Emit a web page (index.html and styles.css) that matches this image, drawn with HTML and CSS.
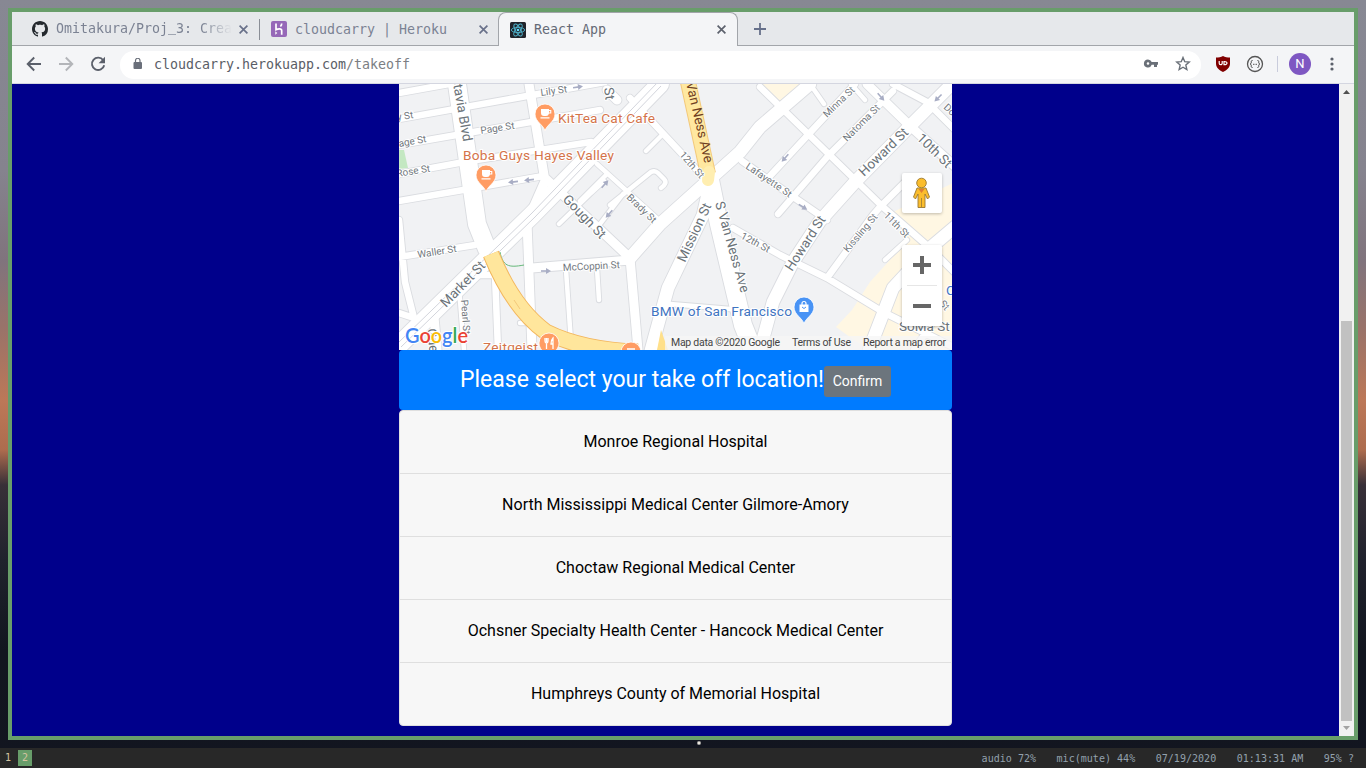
FILE: index.html
```html
<!DOCTYPE html>
<html lang="en">
<head>
<meta charset="utf-8">
<title>React App</title>
<link rel="stylesheet" href="styles.css">
</head>
<body>
<div class="desktop">
  <div class="window">
    <div class="tabs">
      <div class="tab tab-first">
        <svg class="fav" viewBox="0 0 16 16"><path fill="#24292e" d="M8 0C3.58 0 0 3.58 0 8c0 3.54 2.29 6.53 5.47 7.59.4.07.55-.17.55-.38 0-.19-.01-.82-.01-1.49-2.01.37-2.53-.49-2.69-.94-.09-.23-.48-.94-.82-1.13-.28-.15-.68-.52-.01-.53.63-.01 1.08.58 1.23.82.72 1.21 1.87.87 2.33.66.07-.52.28-.87.51-1.07-1.78-.2-3.64-.89-3.64-3.95 0-.87.31-1.59.82-2.15-.08-.2-.36-1.02.08-2.12 0 0 .67-.21 2.2.82.64-.18 1.32-.27 2-.27s1.36.09 2 .27c1.53-1.04 2.2-.82 2.2-.82.44 1.1.16 1.92.08 2.12.51.56.82 1.27.82 2.15 0 3.07-1.87 3.75-3.65 3.95.29.25.54.73.54 1.48 0 1.07-.01 1.93-.01 2.2 0 .21.15.46.55.38A8.01 8.01 0 0 0 16 8c0-4.42-3.58-8-8-8z"/></svg>
        <span class="tab-title fade">Omitakura/Proj<span class="underscore">_</span>3: Crea</span>
        <svg class="close" viewBox="0 0 8 8"><path d="M.5.5l7 7m0-7l-7 7"/></svg>
      </div>
      <div class="tab tab-second">
        <svg class="fav" viewBox="0 0 16 16"><rect width="16" height="16" rx="2" fill="#9668b8"/><path d="M5 2.500v6.200c2-1 5.700-1.700 5.700 1v4M10.700 2.500c0 1.200-.5 2.200-1.300 3" fill="none" stroke="#fff" stroke-width="1.700"/><path d="M4.300 10.200l2 1.800-2 1.800z" fill="#fff"/></svg>
        <span class="tab-title">cloudcarry | Heroku</span>
        <svg class="close" viewBox="0 0 8 8"><path d="M.5.5l7 7m0-7l-7 7"/></svg>
      </div>
      <div class="tab tab-active">
        <svg class="fav" viewBox="0 0 16 16"><rect width="16" height="16" rx="1.500" fill="#20232a"/><g fill="none" stroke="#4fb3cc" stroke-width=".9"><ellipse cx="8" cy="8" rx="6.700" ry="2.600"/><ellipse cx="8" cy="8" rx="6.700" ry="2.600" transform="rotate(60 8 8)"/><ellipse cx="8" cy="8" rx="6.700" ry="2.600" transform="rotate(120 8 8)"/></g><circle cx="8" cy="8" r="1.300" fill="#61dafb"/></svg>
        <span class="tab-title">React App</span>
        <svg class="close dark" viewBox="0 0 8 8"><path d="M.5.5l7 7m0-7l-7 7"/></svg>
      </div>
      <div class="new-tab"><svg width="12" height="12" viewBox="0 0 12 12"><path d="M6 0v12M0 6h12" stroke="#66708a" stroke-width="1.800"/></svg></div>
    </div>
    <div class="toolbar">
      <div class="nav">
        <svg width="16" height="16" viewBox="0 0 16 16"><path d="M15 8H2M8.200 1.500L1.700 8l6.500 6.500" fill="none" stroke="#5b606b" stroke-width="1.900"/></svg>
        <svg width="16" height="16" viewBox="0 0 16 16"><path d="M1 8h13M7.800 1.500L14.300 8l-6.500 6.500" fill="none" stroke="#b3b5b9" stroke-width="1.900"/></svg>
        <svg width="16" height="16" viewBox="0 0 16 16"><path d="M13.200 4.200A6.200 6.200 0 1 0 14.200 9.200" fill="none" stroke="#5b606b" stroke-width="1.900"/><path d="M15 .8v6.400H8.600z" fill="#5b606b"/></svg>
      </div>
      <div class="omnibox">
        <svg width="10" height="12" viewBox="0 0 10 12"><rect x=".5" y="4" width="8.500" height="7" rx="1" fill="#6a6f7a"/><path d="M2.500 4.500v-2a2.250 2.250 0 0 1 4.500 0v2" fill="none" stroke="#6a6f7a" stroke-width="1.200"/></svg>
        <span class="url"><b>cloudcarry.herokuapp.com</b>/takeoff</span>
        <svg class="key" width="16" height="10" viewBox="0 0 16 10"><path d="M5 .5a4 4 0 1 0 3.700 5.300H11V8h3V5.800h1V3.100H8.700A4 4 0 0 0 5 .5zm0 2.700a1.300 1.300 0 1 1 0 2.600 1.300 1.300 0 0 1 0-2.600z" fill="#6a7078"/></svg>
        <svg width="16" height="16" viewBox="0 0 16 16"><path d="M8 1.500l1.750 4.200 4.500.4-3.400 3 1 4.400L8 11.200 4.150 13.500l1-4.400-3.400-3 4.500-.4z" fill="none" stroke="#6a7078" stroke-width="1.400"/></svg>
      </div>
      <div class="extensions">
        <svg width="16" height="16" viewBox="0 0 16 16"><path d="M8 0c2 1.300 4.500 1.500 7 1.500v6c0 4-3 6.500-7 8.500C4 14 1 11.500 1 7.500v-6C3.500 1.500 6 1.300 8 0z" fill="#800000"/><path d="M4.200 5v2.200a1.500 1.500 0 0 0 3 0V5M9 5.500v3.200c4 .3 4-3.500 0-3.200z" fill="none" stroke="#fff" stroke-width="1.200"/></svg>
        <svg width="18" height="18" viewBox="0 0 18 18"><circle cx="9" cy="9" r="7.500" fill="none" stroke="#555" stroke-width="1.300"/><path d="M6.500 5.500c-1.500 0-1.200.8-1.200 1.800S5 8.600 4.200 9c.8.300 1.100.8 1.100 1.700s-.3 1.800 1.200 1.800M11.500 5.500c1.500 0 1.200.8 1.200 1.800s.3 1.300 1.100 1.700c-.8.300-1.100.8-1.100 1.700s.3 1.800-1.200 1.800" fill="none" stroke="#444"/><path d="M7 9.300h4" stroke="#555" stroke-dasharray="1 .5"/></svg>
        <i class="divider"></i>
        <span class="avatar">N</span>
        <svg width="4" height="14" viewBox="0 0 4 14"><g fill="#5b606b"><circle cx="2" cy="2" r="1.600"/><circle cx="2" cy="7" r="1.600"/><circle cx="2" cy="12" r="1.600"/></g></svg>
      </div>
    </div>
    <div class="viewport">
      <main class="page">
        <svg class="map" viewBox="399 84 553 266">
          <defs>
            <g id="pin"><path d="M0 14C-1.200 8-10 5-10-3a10 10 0 0 1 20 0C10 5 1.200 8 0 14z" stroke="#fff" stroke-width=".8"/></g>
            <g id="cup" fill="#fff"><path d="M-5-7H3v1h2.300v3.500H3C2.500-.8 1.500 0 0 0h-2c-2 0-3-1-3-3zM3-5v1.500h1.200V-5zM-5.500 1.200h9v1.300h-9z"/></g>
            <g id="dir"><path d="M-5 0H1" stroke="#a8adc4" stroke-width="1.600"/><path d="M0-3L5 0 0 3z" fill="#a8adc4"/></g>
            <g id="roads" fill="none" stroke-linejoin="round" stroke-linecap="round">
              <g class="w5">
                <path d="M597 269l2 31M566 270l5 72M670 304l72 6M597 164l63 57M663 134l-17 17M610 205l41-33q4-2 7 1l6 6q4 4-3 9M600 224l23-30M580 201l27-27M559 224l32-31 13-12M810 84l14 20M851 84l14 16M459 288l5 62M520 323h12M885 260l22-20"/>
              </g>
              <g class="w7">
                <path d="M399 93l50-9M399 119l206-37M399 145l201-35M399 174l65-12 127-20M399 201l64-11 80-14M399 257l76-12M399 220l6 62 9 36-15-5M477 275h18l3 75M630 98l80 86M742 161l50 35 35 24M760 87l123 120 47 41 40 40M893 84l34 18 30 30M855 84l-85 92M893 91l-65 65-50 58M905 182l-25 25-7 8-46 63M733 228l47 27 47 23 56 34 80 40M914 350l20-30"/>
              </g>
              <g class="w9">
                <path d="M529 84l16 97-18 41 5 128M532 268l98-8M545 178l85 80 8 92M867 84l43 42 50 45M434 317l3 33M607 90l10 10"/>
              </g>
              <g class="w13">
                <path d="M810 84l-50 43-20 25-80 72-30 34M952 84l-42 42-55 56-35 39-27 41-20 40-13 48M963 220l-33 28-37 40-24 62M710 184l-7 31-35 73-17 62"/>
              </g>
              <g class="w19">
                <path d="M457 84l20 140 10 25M710 180l9 44 24 101 10 25M399 345l133-130 48-49 80-82"/>
              </g>
            </g>
          </defs>
          <rect x="399" y="84" width="553" height="266" fill="#f1f2f4"/>
          <path d="M760 84h40l-18 19zM908 240l-38 42-18 28-16 17 18 13 16 10h83V183l-60 29z" fill="#fff7e3"/>
          <path d="M399 150h5l4 18-9 1z" fill="#c4e8c2"/>
          <use href="#roads" class="casing"/>
          <use href="#roads" class="surface"/>
          <path d="M401 347l134-130 47-49 79-82M398 343l134-130 47-49 79-82" fill="none" stroke="#d3d5dc"/>
          <path d="M500 252c3 14 8 16 24 13M488 266l4 9" fill="none" stroke="#65b879"/>
          <path d="M491 254q22 54 55 78 36 18 92 20" fill="none" stroke="#f3b75e" stroke-width="17"/>
          <path d="M491 254q22 54 55 78 36 18 92 20" fill="none" stroke="#ffe69c" stroke-width="15"/>
          <path d="M514 300l6 9" stroke="#f3c97b" fill="none"/>
          <path d="M688 82l20 92" fill="none" stroke="#f3c97b" stroke-width="16"/>
          <path d="M688 82l20 92" fill="none" stroke="#ffe8a0" stroke-width="14"/>
          <path d="M709 172l-1 8" stroke="#ffeeb0" stroke-width="12" stroke-linecap="round"/>
          <path d="M661 330l7 20h-11z" fill="#ffe08a"/>
          <g>
            <use href="#dir" transform="translate(513 182) rotate(173)"/><use href="#dir" transform="translate(529 180) rotate(173)"/>
            <use href="#dir" transform="translate(578 87) rotate(-8)"/><use href="#dir" transform="translate(546 271)"/>
            <use href="#dir" transform="translate(605 184) rotate(-48)"/><use href="#dir" transform="translate(609 214) rotate(132)"/>
            <use href="#dir" transform="translate(881 97) rotate(48)"/><use href="#dir" transform="translate(938 98) rotate(135)"/>
            <use href="#dir" transform="translate(785 158) rotate(132)"/><use href="#dir" transform="translate(803 207) rotate(32)"/>
          </g>
          <g class="street small">
            <text transform="translate(541 96) rotate(-8)">Lily St</text>
            <text transform="translate(481 134) rotate(-9)">Page St</text>
            <text transform="translate(395 121) rotate(-9)">ly St</text>
            <text transform="translate(393 148) rotate(-10)">Page St</text>
            <text transform="translate(397 177) rotate(-9)">Rose St</text>
            <text transform="translate(418 258) rotate(-9)">Waller St</text>
            <text transform="translate(563 271) rotate(-3)">McCoppin St</text>
            <text transform="translate(461 300) rotate(86)">Pearl St</text>
            <text transform="translate(679 155) rotate(49)">12th St</text>
            <text transform="translate(626 198) rotate(44)">Brady St</text>
            <text transform="translate(745 168) rotate(34)">Lafayette St</text>
            <text transform="translate(740 238) rotate(28)">12th St</text>
            <text transform="translate(827 118) rotate(-44)">Minna St</text>
            <text transform="translate(847 142) rotate(-45)">Natoma St</text>
            <text transform="translate(848 253) rotate(-50)">Kissling St</text>
            <text transform="translate(883 216) rotate(45)">11th St</text>
            <text transform="translate(943 108) rotate(43)">Dore St</text>
            <text transform="translate(939 304) rotate(48)">St</text>
          </g>
          <g class="street">
            <text transform="translate(452 78) rotate(80)">ctavia Blvd</text>
            <text transform="translate(604 88) rotate(82)">St</text>
            <text transform="translate(562 200) rotate(46)">Gough St</text>
            <text transform="translate(446 308) rotate(-46)">Market St</text>
            <text transform="translate(685 263) rotate(-65)">Mission St</text>
            <text transform="translate(715 203) rotate(74)">S Van Ness Ave</text>
            <text transform="translate(864 177) rotate(-44)">Howard St</text>
            <text transform="translate(792 272) rotate(-57)">Howard St</text>
            <text transform="translate(916 139) rotate(44)">10th St</text>
            <text x="899" y="331">SoMa St</text>
            <text transform="translate(427 329) rotate(84)">Gue</text>
            <text transform="translate(686 83) rotate(77)" class="avenue">Van Ness Ave</text>
          </g>
          <g class="poi">
            <text x="558" y="123" textLength="97">KitTea Cat Cafe</text>
            <text x="463" y="160" textLength="151">Boba Guys Hayes Valley</text>
            <text x="483" y="352" textLength="55">Zeitgeist</text>
            <text x="651" y="316" textLength="141" class="shop">BMW of San Francisco</text>
            <text x="946" y="295" class="shop">C</text>
          </g>
          <g fill="#ff9c63"><use href="#pin" x="545" y="117"/><use href="#pin" x="486" y="178"/><use href="#pin" x="549" y="346"/><use href="#pin" x="631" y="355"/></g>
          <use href="#pin" x="804" y="310" fill="#4893f5"/>
          <use href="#cup" x="546" y="116"/><use href="#cup" x="487" y="177"/>
          <path d="M545 338v3q0 2 1.500 2v6M548 338v3q0 2-1.500 2M546.500 338v4M553 349v-11q-2 2-2 6h2M627 349h8" fill="none" stroke="#fff" stroke-width="1.300"/>
          <path d="M799.500 304.500h9v7.500h-9z" fill="#fff"/><path d="M802 305v-1.500a2 2 0 0 1 4 0v1.500" fill="none" stroke="#fff" stroke-width="1.200"/><path d="M802 307q2 3 4 0" fill="none" stroke="#4893f5"/>
          <text class="google" x="405" y="343" textLength="63" lengthAdjust="spacingAndGlyphs"><tspan fill="#4285f4">G</tspan><tspan fill="#ea4335">o</tspan><tspan fill="#fbbc04">o</tspan><tspan fill="#4285f4">g</tspan><tspan fill="#34a853">l</tspan><tspan fill="#ea4335">e</tspan></text>
          <rect x="665" y="336" width="287" height="14" fill="#f5f5f5" opacity=".75"/>
          <g class="legal"><text x="671" y="346" textLength="109">Map data ©2020 Google</text><text x="792" y="346" textLength="59">Terms of Use</text><text x="863" y="346" textLength="83">Report a map error</text></g>
          <g class="control"><rect x="902" y="173" width="40" height="40" rx="2"/><rect x="902" y="245" width="40" height="81" rx="2"/></g>
          <path d="M907 285.500h30" stroke="#e6e6e6"/>
          <path d="M913 265h18M922 256v18M913 306h18" stroke="#666" stroke-width="4"/>
          <g fill="#fbbd2c" stroke="#9a7833" stroke-width=".9"><path d="M917 188h9l3.500 9-2 2-2.500-5v13.500h-7V194l-2.500 5-2-2z"/><circle cx="921.500" cy="183" r="4.800"/></g><path d="M918.500 189h6l-3 4z" fill="#df7d32"/><path d="M921.500 198v9" stroke="#9a7833" stroke-width=".8"/>
        </svg>
        <header class="banner"><h1>Please select your take off location!</h1><button class="confirm">Confirm</button></header>
        <ul class="hospitals">
          <li>Monroe Regional Hospital</li>
          <li>North Mississippi Medical Center Gilmore-Amory</li>
          <li>Choctaw Regional Medical Center</li>
          <li>Ochsner Specialty Health Center - Hancock Medical Center</li>
          <li>Humphreys County of Memorial Hospital</li>
        </ul>
      </main>
      <div class="scrollbar">
        <svg width="7" height="4" viewBox="0 0 7 4"><path d="M0 4l3.500-4L7 4z" fill="#505050"/></svg>
        <i class="thumb"></i>
        <svg width="7" height="4" viewBox="0 0 7 4"><path d="M0 0l3.500 4L7 0z" fill="#a3a3a3"/></svg>
      </div>
    </div>
  </div>
  <footer class="status">
    <span class="space">1</span><span class="space current">2</span>
    <div class="stats"><span>audio 72%</span><span>mic(mute) 44%</span><span>07/19/2020</span><span>01:13:31 AM</span><span>95% ?</span></div>
  </footer>
</div>
</body>
</html>
```
FILE: styles.css
```css
* { box-sizing: border-box; }
body { margin: 0; font-family: Roboto, sans-serif; }
svg { display: block; flex: none; }
.desktop {
  width: 1366px; height: 768px; overflow: hidden;
  display: flex; flex-direction: column; justify-content: space-between;
  padding-top: 8px;
  background:
    radial-gradient(circle at 699px 743px, #e8e4dc 1px, transparent 2.500px),
    linear-gradient(#878893 0, #85838e 170px, #80747d 260px, #9a7369 330px, #bc7858 400px, #ad6c4e 450px, #383038 485px, #20222d 560px, #12161f 650px, #121520 768px);
}
.window {
  width: 1350px; height: 732px; margin-left: 8px;
  border: 4px solid #689d6a;
  display: flex; flex-direction: column;
}
.tabs { height: 34px; flex: none; display: flex; background: #e6e8eb; border-bottom: 1px solid #a2a5aa; }
.tab { height: 34px; display: flex; align-items: center; font: 13.290px "DejaVu Sans Mono", monospace; color: #7b8293; }
.tab-title { flex: 1; margin-left: 8px; padding-top: 1px; white-space: nowrap; overflow: hidden; line-height: 22px; }
.underscore { font-family: "Liberation Mono", monospace; }
.fav { width: 16px; height: 16px; }
.close { width: 9px; height: 9px; stroke: #69718a; stroke-width: 1.500; fill: none; }
.close.dark { stroke: #5d626d; }
.fade { mask-image: linear-gradient(90deg, #000 145px, transparent 176px); }
.tab-first { width: 236px; padding-left: 20px; }
.tab-first .tab-title { flex: 0 0 176px; margin-right: 7px; }
.tab-second { width: 250px; padding: 0 10px 0 23px; background: linear-gradient(#8a8e96, #8a8e96) 11px 7px / 1px 21px no-repeat; }
.tab-active { width: 240px; padding: 0 11px; background: #f4f5f7; border: 1px solid #a2a5aa; border-bottom: 0; border-radius: 8px 8px 0 0; color: #646a76; }
.new-tab { padding: 11px 16px; }
.toolbar { height: 38px; flex: none; display: flex; align-items: center; background: #f4f5f7; border-bottom: 1px solid #d4d6e0; }
.nav { display: flex; gap: 16px; padding: 0 14px; }
.nav svg, .omnibox svg { margin-top: -1px; }
.omnibox { width: 1081px; height: 28px; border-radius: 14px; background: #fff; display: flex; align-items: center; padding: 0 10px 0 13px; }
.url { flex: 1; margin-left: 11px; font: 13.290px "DejaVu Sans Mono", monospace; color: #7b7e83; }
.url b { font-weight: 400; color: #595d66; }
.key { margin-right: 16px; }
.extensions { flex: 1; display: flex; align-items: center; padding-left: 14px; margin-top: -1px; }
.extensions svg:nth-child(2) { margin-left: 15px; }
.divider { width: 1px; height: 16px; background: #c9ccdc; margin: 0 11px 0 13px; }
.avatar { width: 22px; height: 22px; border-radius: 50%; background: #7e57c2; color: #fff; font-size: 13px; line-height: 22px; text-align: center; margin-right: 19px; }
.viewport { flex: 1; display: flex; justify-content: flex-end; background: #00008b; }
.page { width: 553px; margin-right: 387px; }
.map { width: 553px; height: 266px; overflow: hidden; }
.w5 { stroke-width: calc(4.500px + var(--edge)); }
.w7 { stroke-width: calc(6.500px + var(--edge)); }
.w9 { stroke-width: calc(9px + var(--edge)); }
.w13 { stroke-width: calc(12.500px + var(--edge)); }
.w19 { stroke-width: calc(18px + var(--edge)); }
.casing { --edge: 1.800px; stroke: #dadce0; }
.surface { --edge: 0px; stroke: #fff; }
.street { font-size: 13.500px; fill: #6b7379; stroke: #fff; stroke-width: 2px; paint-order: stroke; }
.small { font-size: 10px; fill: #737980; }
.avenue { fill: #703f22; stroke: #ffe8a0; }
.poi { font-size: 13.700px; fill: #d4734a; stroke: #fff; stroke-width: 2px; paint-order: stroke; }
.shop { fill: #3f74c1; }
.google { font-family: Lato, sans-serif; font-size: 21px; font-weight: 600; stroke: #fff; stroke-width: 2px; paint-order: stroke; }
.legal { font-size: 10.500px; fill: #444; }
.control { fill: #fff; filter: drop-shadow(0 1px 1.500px rgba(0, 0, 0, .25)); }
.banner { height: 60px; border-radius: 4px; background: #007bff; display: flex; justify-content: center; align-items: flex-start; color: #fff; }
.banner h1 { margin: 15px 0 0; font-size: 23px; line-height: 29px; font-weight: 400; white-space: nowrap; }
.confirm { width: 67px; height: 31px; margin-top: 16px; padding: 0 0 2px; border: 0; border-radius: 3px; background: #6c757d; color: #fff; font: 14px Roboto, sans-serif; }
.hospitals { margin: 0; padding: 0; list-style: none; height: 316px; border: 1px solid #dfdfdf; border-radius: 4px; background: #f7f7f7; font-size: 16px; text-align: center; }
.hospitals li { height: 63px; line-height: 61px; border-bottom: 1px solid #dfdfdf; color: #000; }
.hospitals li:last-child { border: 0; }
.scrollbar { width: 15px; background: #f1f1f1; display: flex; flex-direction: column; align-items: center; padding: 6px 0 6px; }
.thumb { width: 11px; height: 400px; background: #c1c1c1; margin: auto 0 5px; }
.status { height: 20px; display: flex; align-items: center; background: #282828; font: 10.050px "DejaVu Sans Mono", monospace; color: #d5c4a1; padding: 0 12px 0 0; }
.space { width: 14px; height: 16px; line-height: 16px; text-align: center; margin-left: 1px; }
.current { background: #689d6a; margin-left: 3px; }
.stats { margin-left: auto; display: flex; gap: 20.500px; color: #93a1ad; }
```
